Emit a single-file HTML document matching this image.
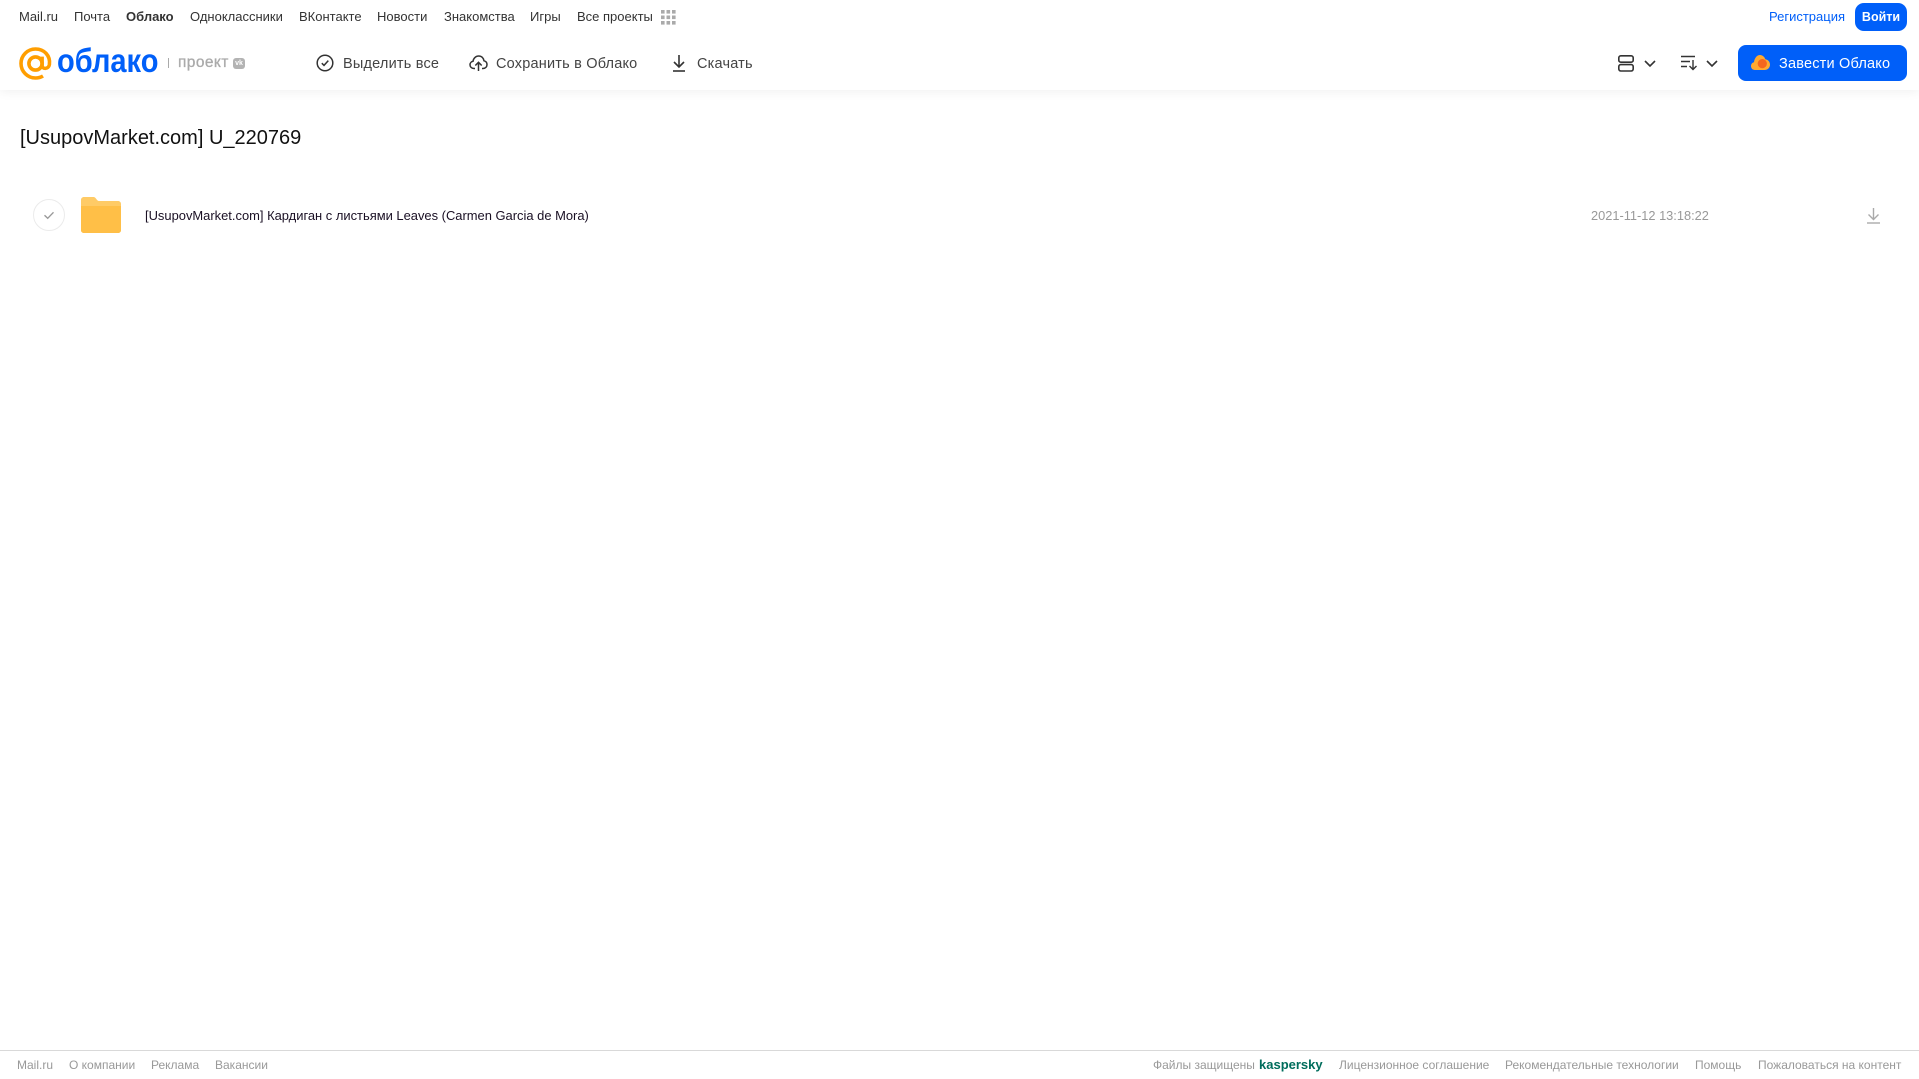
<!DOCTYPE html>
<html lang="ru"><head><meta charset="utf-8"><title>Облако</title>
<style>
html,body{margin:0;padding:0;background:#fff;width:1919px;height:1079px;overflow:hidden;font-family:"Liberation Sans",Arial,sans-serif}
.t{position:absolute;white-space:nowrap;line-height:16px}
.n{font-size:13px;color:#333;top:9px}
.b{font-size:14.5px;color:#444;top:55.5px;letter-spacing:.2px}
.f{font-size:12px;color:#999;top:1057px}
svg{position:absolute;overflow:visible}
#hd{position:absolute;left:0;top:0;width:1919px;height:90px;background:#fff;box-shadow:0 2px 10px rgba(0,0,0,.06)}
</style></head><body>
<div id="hd"></div>
<span class="t n" style="left:19px">Mail.ru</span>
<span class="t n" style="left:74px">Почта</span>
<span class="t n" style="left:126px;font-weight:bold">Облако</span>
<span class="t n" style="left:190px">Одноклассники</span>
<span class="t n" style="left:299px">ВКонтакте</span>
<span class="t n" style="left:377px">Новости</span>
<span class="t n" style="left:444px">Знакомства</span>
<span class="t n" style="left:530px">Игры</span>
<span class="t n" style="left:577px">Все проекты</span>
<svg style="left:661px;top:10px" width="15" height="15" fill="#aaa"><rect x="0" y="0" width="3.6" height="3.6"/><rect x="5.5" y="0" width="3.6" height="3.6"/><rect x="11" y="0" width="3.6" height="3.6"/><rect x="0" y="5.5" width="3.6" height="3.6"/><rect x="5.5" y="5.5" width="3.6" height="3.6"/><rect x="11" y="5.5" width="3.6" height="3.6"/><rect x="0" y="11" width="3.6" height="3.6"/><rect x="5.5" y="11" width="3.6" height="3.6"/><rect x="11" y="11" width="3.6" height="3.6"/></svg>
<span class="t n" style="left:1769px;color:#005ff9">Регистрация</span>
<div class="t" style="left:1855px;top:3px;width:52px;height:28px;line-height:28px;background:#005ff9;border-radius:9px;color:#fff;font-size:12.5px;font-weight:bold;text-align:center">Войти</div>

<svg style="left:19px;top:47px" width="33" height="33" viewBox="0 0 33 33" fill="none" stroke="#ff9e00" stroke-width="3.6"><circle cx="16.5" cy="16.5" r="6.6"/><path d="M23.1 9.6V18.5C23.1 22.5 29.6 22.5 30.4 17.5C31.6 8.5 25 2 16.5 2C8.5 2 2 8.5 2 16.5S8.5 31 16.5 31C19.5 31 22 30.2 24 29"/></svg>
<span class="t" style="left:57px;top:43px;line-height:36px;font-size:33px;font-weight:bold;color:#005ff9;transform:scaleX(.88);transform-origin:0 0">облако</span>
<div style="position:absolute;left:168px;top:58px;width:1px;height:10px;background:#aaa"></div>
<span class="t" style="left:178px;top:55px;font-size:15.5px;color:#aaa;letter-spacing:.4px;-webkit-text-stroke:.3px #aaa">проект</span>
<div class="t" style="left:233px;top:58px;width:12px;height:11px;line-height:11px;background:#b3b3b3;border-radius:3px;color:#fff;font-size:7px;font-weight:bold;text-align:center">vk</div>

<svg style="left:316px;top:54px" width="18" height="18" viewBox="0 0 18 18" fill="none" stroke="#333" stroke-width="1.5"><circle cx="9" cy="9" r="7.8"/><path d="M5.8 9.2L8 11.4L12.3 6.6"/></svg>
<span class="t b" style="left:343px">Выделить все</span>
<svg style="left:469px;top:54px" width="19" height="18" viewBox="0 0 19 18" fill="none" stroke="#333" stroke-width="1.5"><path d="M6 14.5H5C2.5 14.5 1 12.8 1 10.8C1 9 2.3 7.6 4 7.3C4.5 4 7 2 9.7 2C12.5 2 14.6 4 15 6.8C16.8 7.2 18 8.7 18 10.6C18 12.8 16.4 14.5 14 14.5H13"/><path d="M9.5 17V8.5M6.3 11.5L9.5 8.3L12.7 11.5"/></svg>
<span class="t b" style="left:496px">Сохранить в Облако</span>
<svg style="left:672px;top:54px" width="14" height="18" viewBox="0 0 14 18" fill="none" stroke="#333" stroke-width="1.6"><path d="M7 1V12.5M2 8L7 13L12 8"/><path d="M1 17H13"/></svg>
<span class="t b" style="left:697px">Скачать</span>

<svg style="left:1618px;top:55px" width="16" height="17" viewBox="0 0 16 17" fill="none" stroke="#333" stroke-width="1.6"><rect x=".8" y=".8" width="14.4" height="6.4" rx="2"/><rect x=".8" y="9.6" width="14.4" height="6.4" rx="2"/></svg>
<svg style="left:1644px;top:60px" width="12" height="7" fill="none" stroke="#333" stroke-width="1.6"><path d="M1 1L6 6L11 1"/></svg>
<svg style="left:1681px;top:55px" width="17" height="16" viewBox="0 0 17 16" fill="none" stroke="#333" stroke-width="1.4"><path d="M0 1.5H14M0 6.5H9M0 11.5H6"/><path d="M12 5V14.5M8.5 11L12 14.5L15.5 11"/></svg>
<svg style="left:1706px;top:60px" width="12" height="7" fill="none" stroke="#333" stroke-width="1.6"><path d="M1 1L6 6L11 1"/></svg>

<div style="position:absolute;left:1738px;top:45px;width:169px;height:36px;background:#005ff9;border-radius:8px"></div>
<svg style="left:1751px;top:55px" width="19" height="15" viewBox="0 0 19 15"><path d="M4 15C1.5 15 0 13.2 0 11C0 9 1.3 7.5 3 7.2C3.5 3 6 0 9 0C11.5 0 13.5 1.8 14.3 4.2C17 4.5 19 6.8 19 9.6C19 12.7 16.6 15 13.5 15Z" fill="#ffa930"/><circle cx="11.3" cy="8.6" r="4.6" fill="#f4661e"/></svg>
<span class="t" style="left:1779px;top:55.5px;font-size:14.5px;color:#fff;letter-spacing:.2px">Завести Облако</span>

<span class="t" style="left:20px;top:125px;line-height:26px;font-size:20px;color:#111">[UsupovMarket.com] U_220769</span>

<svg style="left:33px;top:199px" width="32" height="32" viewBox="0 0 32 32" fill="none"><circle cx="16" cy="16" r="15.5" stroke="#ebebeb"/><path d="M11.5 16.3L14.7 19.3L20.5 13.3" stroke="#999" stroke-width="1.4"/></svg>
<svg style="left:81px;top:197px" width="40" height="36" viewBox="0 0 40 36"><path d="M3 0H12C14 0 14.5 1 15.5 2.2C16.5 3.5 17 4 19 4H37C38.8 4 40 5.2 40 7V33C40 34.8 38.8 36 37 36H3C1.2 36 0 34.8 0 33V3C0 1.2 1.2 0 3 0Z" fill="#ffcb66"/><path d="M0 9H40V33C40 34.8 38.8 36 37 36H3C1.2 36 0 34.8 0 33Z" fill="#ffbf47"/></svg>
<span class="t" style="left:145px;top:207.5px;font-size:12.93px;color:#1a1024">[UsupovMarket.com] Кардиган с листьями Leaves (Carmen Garcia de Mora)</span>
<span class="t" style="left:1591px;top:207.5px;font-size:12.8px;color:#999">2021-11-12 13:18:22</span>
<svg style="left:1866.5px;top:207px" width="13" height="17" viewBox="0 0 13 17" fill="none" stroke="#aaa" stroke-width="1.4"><path d="M6.5 1V12M1.5 7.5L6.5 12.5L11.5 7.5"/><path d="M0 16H13"/></svg>

<div style="position:absolute;left:0;top:1050px;width:1919px;height:1px;background:#d9d9d9"></div>
<span class="t f" style="left:17px">Mail.ru</span>
<span class="t f" style="left:69px">О компании</span>
<span class="t f" style="left:151px">Реклама</span>
<span class="t f" style="left:215px">Вакансии</span>
<span class="t f" style="left:1153px">Файлы защищены</span>
<span class="t f" style="left:1259px;color:#006d5c;font-weight:bold;font-size:13px">kaspersky</span>
<span class="t f" style="left:1339px">Лицензионное соглашение</span>
<span class="t f" style="left:1505px">Рекомендательные технологии</span>
<span class="t f" style="left:1695px">Помощь</span>
<span class="t f" style="left:1758px">Пожаловаться на контент</span>
</body></html>
